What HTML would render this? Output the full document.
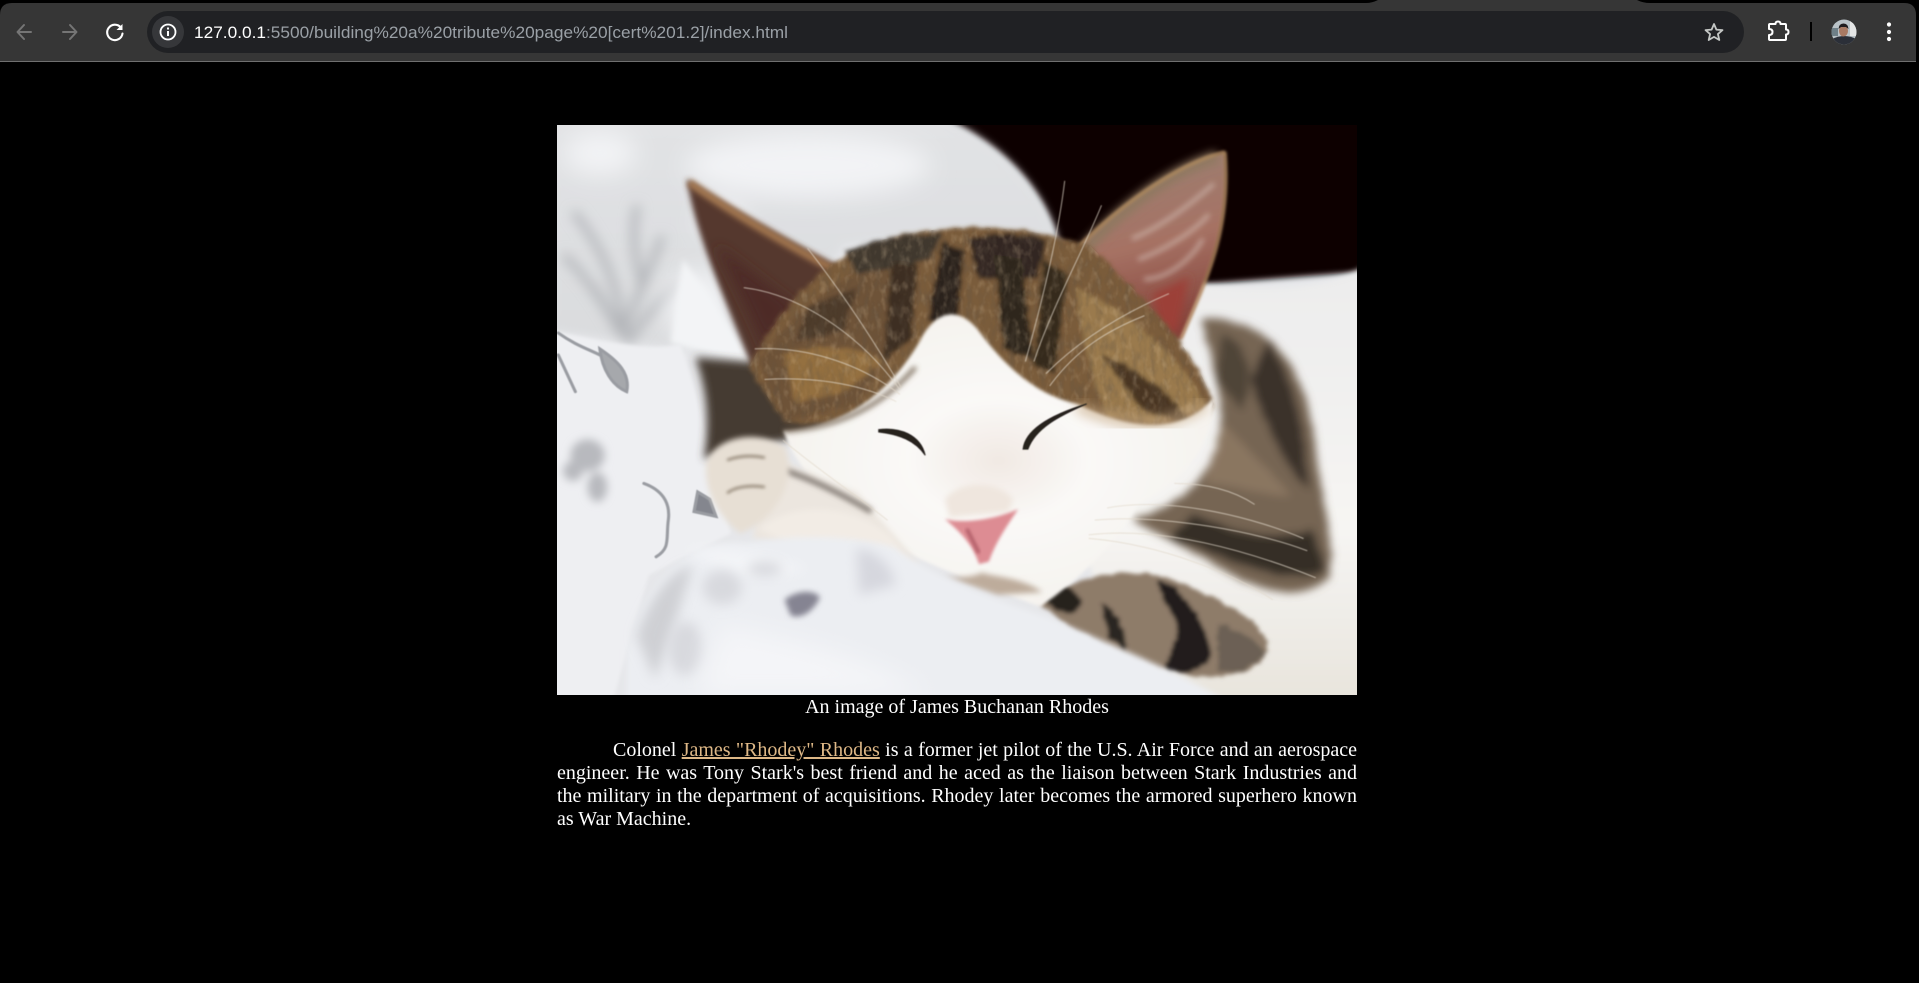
<!DOCTYPE html>
<html lang="en">
<head>
<meta charset="utf-8">
<title>Tribute page</title>
<style>
html,body{margin:0;padding:0;background:#000;width:1919px;height:983px;overflow:hidden}
#chrome{position:absolute;left:0;top:0;display:block}
#main{position:absolute;left:557px;top:125px;width:800px;color:#fff;font:20px/23px "Liberation Serif","Times New Roman",serif}
#cat{display:block;width:800px;height:570px}
#cap{text-align:center;position:relative;top:1px}
#main p{margin:20px 0 0;text-align:justify;text-indent:56px;position:relative;top:1px}
#main a{color:#deb887;text-decoration:underline}
</style>
</head>
<body>
<svg id="chrome" width="1919" height="62" viewBox="0 0 1919 62" xmlns="http://www.w3.org/2000/svg">
  <rect width="1919" height="62" fill="#000"/>
  <path d="M0 62V15Q0 3 12 3H1904Q1916 3 1916 15V62Z" fill="#363636"/>
  <path d="M1366 3Q1372 3 1378 0H1637Q1643 3 1650 3Z" fill="#363636"/>
  <rect y="61" width="1916" height="1" fill="#6f6f6f"/>
  <rect x="147" y="11" width="1597" height="42" rx="21" fill="#202124"/>
  <circle cx="168" cy="32" r="16" fill="#36373a"/>
  <g fill="none" stroke-linecap="round" stroke-linejoin="round">
    <path d="M31 32H18M24 25L17.500 32L24 39" stroke="#757575" stroke-width="2"/>
    <path d="M63 32H76M70 25L76.500 32L70 39" stroke="#757575" stroke-width="2"/>
    <path d="M120.800 27.500A7.700 7.700 0 1 0 122.500 33.500" stroke="#fff" stroke-width="2.100"/>
    <circle cx="168" cy="32" r="7.500" stroke="#fff" stroke-width="1.800"/>
  </g>
  <path d="M122.500 24V30H116.500Z" fill="#fff"/>
  <rect x="167" y="31" width="2" height="5" fill="#fff"/>
  <rect x="167" y="27.500" width="2" height="2" fill="#fff"/>
  <text x="194" y="38" font-family="Liberation Sans, sans-serif" font-size="17" fill="#9aa0a6" textLength="594" lengthAdjust="spacingAndGlyphs"><tspan fill="#fff">127.0.0.1</tspan>:5500/building%20a%20tribute%20page%20[cert%201.2]/index.html</text>
  <path d="M1714 24L1716.400 29.600L1722.500 30.100L1717.900 34.100L1719.300 40L1714 36.900L1708.700 40L1710.100 34.100L1705.500 30.100L1711.600 29.600Z" fill="none" stroke="#c4c7c5" stroke-width="1.800" stroke-linejoin="round"/>
  <path d="M1770 24H1775.500Q1775.500 21.500 1778 21.500Q1780.500 21.500 1780.500 24H1785Q1786 24 1786 25V29.500Q1788.500 29.500 1788.500 32Q1788.500 34.500 1786 34.500V39Q1786 40 1785 40H1770Q1769 40 1769 39V35Q1772.500 35 1772.500 32Q1772.500 29 1769 29V25Q1769 24 1770 24Z" fill="none" stroke="#fff" stroke-width="2" stroke-linejoin="round"/>
  <rect x="1810" y="22" width="2" height="19" fill="#000"/>
  <clipPath id="av"><circle cx="1844" cy="32" r="12.500"/></clipPath>
  <g clip-path="url(#av)">
    <rect x="1830" y="18" width="28" height="28" fill="#b9c2c7"/>
    <rect x="1850" y="20" width="8" height="16" fill="#e4e6e6"/>
    <rect x="1830" y="28" width="8" height="8" fill="#6f8088"/>
    <path d="M1832 46V39Q1838 36 1844 36Q1851 36 1856 39V46Z" fill="#2b2f38"/>
    <ellipse cx="1843.500" cy="31" rx="4.500" ry="5.500" fill="#a87a64"/>
    <path d="M1838.500 29Q1839 23.500 1843.500 23.500Q1848 23.500 1848.500 29L1846 27H1841Z" fill="#1e1b1e"/>
  </g>
  <g fill="#fff"><circle cx="1889" cy="24.500" r="2.100"/><circle cx="1889" cy="32" r="2.100"/><circle cx="1889" cy="39" r="2.100"/></g>
</svg>

<div id="main">
<svg id="cat" viewBox="455 102 654 466" xmlns="http://www.w3.org/2000/svg" preserveAspectRatio="none">
  <defs>
    <filter id="b05" x="-20%" y="-20%" width="140%" height="140%"><feGaussianBlur stdDeviation="0.500"/></filter>
    <filter id="b1" x="-20%" y="-20%" width="140%" height="140%"><feGaussianBlur stdDeviation="1.200"/></filter>
    <filter id="b2" x="-20%" y="-20%" width="140%" height="140%"><feGaussianBlur stdDeviation="2.500"/></filter>
    <filter id="b3" x="-20%" y="-20%" width="140%" height="140%"><feGaussianBlur stdDeviation="3.500"/></filter>
    <filter id="b5" x="-30%" y="-30%" width="160%" height="160%"><feGaussianBlur stdDeviation="5"/></filter>
    <filter id="b10" x="-40%" y="-40%" width="180%" height="180%"><feGaussianBlur stdDeviation="10"/></filter>
    <filter id="fur" x="-10%" y="-10%" width="120%" height="120%">
      <feTurbulence type="fractalNoise" baseFrequency="0.09 0.22" numOctaves="2" seed="4" result="n"/>
      <feDisplacementMap in="SourceGraphic" in2="n" scale="6" xChannelSelector="R" yChannelSelector="G"/>
      <feGaussianBlur stdDeviation="1.800"/>
    </filter>
    <filter id="fur2" x="-10%" y="-10%" width="120%" height="120%">
      <feTurbulence type="fractalNoise" baseFrequency="0.05 0.16" numOctaves="2" seed="9" result="n"/>
      <feDisplacementMap in="SourceGraphic" in2="n" scale="4" xChannelSelector="R" yChannelSelector="G"/>
      <feGaussianBlur stdDeviation="3.500"/>
    </filter>
    <filter id="grain" x="0" y="0" width="100%" height="100%">
      <feTurbulence type="fractalNoise" baseFrequency="0.2 0.08" numOctaves="3" seed="12"/>
      <feColorMatrix type="matrix" values="0 0 0 0 .12  0 0 0 0 .09  0 0 0 0 .06  2.200 0 0 0 -.95"/>
      <feGaussianBlur stdDeviation="0.400"/>
    </filter>
    <filter id="grainL" x="0" y="0" width="100%" height="100%">
      <feTurbulence type="fractalNoise" baseFrequency="0.2 0.1" numOctaves="3" seed="31"/>
      <feColorMatrix type="matrix" values="0 0 0 0 .80  0 0 0 0 .62  0 0 0 0 .40  2.200 0 0 0 -1.100"/>
      <feGaussianBlur stdDeviation="0.400"/>
    </filter>
    <linearGradient id="gTop" x1="0" y1="0" x2="0" y2="1"><stop offset="0" stop-color="#e2e3e5"/><stop offset="1" stop-color="#d9dbdd"/></linearGradient>
    <linearGradient id="gBody" x1="0" y1="0" x2="0" y2="1"><stop offset="0" stop-color="#ececec"/><stop offset=".6" stop-color="#f6f5f3"/><stop offset="1" stop-color="#e8e4dc"/></linearGradient>
    <radialGradient id="gFace" cx="0.5" cy="0.5" r="0.6"><stop offset="0" stop-color="#f1e9e3"/><stop offset=".35" stop-color="#faf9f7"/><stop offset="1" stop-color="#f4f1ec"/></radialGradient>
    <linearGradient id="gEar" x1="0" y1="0" x2="0.2" y2="1"><stop offset="0" stop-color="#9a8275"/><stop offset=".55" stop-color="#a67264"/><stop offset="1" stop-color="#83423a"/></linearGradient>
    <clipPath id="imgclip"><rect x="455" y="102" width="654" height="466"/></clipPath>
    <clipPath id="headclip"><path d="M612 300C640 245 680 205 725 195C780 180 840 185 890 200C930 240 975 280 992 330C985 352 960 362 930 360L700 350L640 345Z"/></clipPath>
  </defs>
  <g clip-path="url(#imgclip)">
    <rect x="455" y="102" width="654" height="466" fill="#e6e7ea"/>
    <!-- dark background -->
    <path d="M765 95L1115 95L1115 222L985 232L880 205L864 195C850 150 815 115 765 95Z" fill="#0a0506" filter="url(#b2)"/>
    <!-- top blanket -->
    <path d="M450 95L768 95C815 115 850 150 864 195L800 190L690 200L620 300L560 285L450 270Z" fill="url(#gTop)" filter="url(#b3)"/>
    <g filter="url(#b5)" fill="none" stroke="#b4b6ba" stroke-width="6" stroke-linecap="round">
      <path d="M470 175C490 200 505 230 510 275"/>
      <path d="M540 195C530 225 515 250 510 275"/>
      <path d="M485 235C495 250 505 265 510 275"/>
      <path d="M555 235C540 245 525 260 515 278"/>
      <path d="M462 210C478 225 495 250 505 270"/>
      <path d="M520 170C515 195 520 215 525 235"/>
    </g>
    <g filter="url(#b10)" fill="#f2f3f5">
      <ellipse cx="660" cy="135" rx="100" ry="26"/>
      <ellipse cx="570" cy="250" rx="26" ry="30"/>
      <ellipse cx="490" cy="125" rx="30" ry="18"/>
      <ellipse cx="590" cy="180" rx="20" ry="14"/>
    </g>
    <path d="M558 212C585 250 605 275 613 298L585 290L548 280Z" fill="#f3f4f6" filter="url(#b2)"/>

    <!-- white body -->
    <path d="M975 232C1030 238 1080 238 1115 218L1115 575L940 575L880 440Z" fill="url(#gBody)" filter="url(#b2)"/>

    <!-- back tabby patch -->
    <g filter="url(#fur2)">
      <path d="M982 260C1035 258 1068 295 1076 370C1080 410 1092 445 1086 472C1062 496 1020 482 985 456L925 425C985 405 1003 370 996 320Z" fill="#766552"/>
      <path d="M1036 278C1058 310 1066 350 1070 400C1050 385 1034 345 1022 310Z" fill="#3a322b"/>
      <path d="M998 272C1020 280 1028 310 1014 335L994 310Z" fill="#4f4439"/>
      <path d="M1000 345C1015 365 1040 385 1055 405C1030 405 1005 395 985 395Z" fill="#8a7660"/>
      <path d="M955 440C1000 452 1050 484 1084 466L1072 432C1040 445 1000 432 975 420Z" fill="#352e28"/>
    </g>

    <!-- forearm tabby -->
    <g filter="url(#fur)">
      <path d="M848 492C880 470 925 462 960 474C1000 492 1035 508 1036 530C1030 556 985 556 950 548C910 536 870 512 848 492Z" fill="#8e7c69"/>
      <path d="M945 472C965 480 985 505 990 535C985 550 965 553 950 548C960 530 968 510 950 490Z" fill="#231e1b"/>
      <path d="M900 493C910 497 922 510 920 532L905 522Z" fill="#2a2521"/>
      <path d="M852 488C865 475 878 478 884 490C882 505 870 505 852 490Z" fill="#25201d"/>
      <path d="M995 510C1015 515 1032 525 1034 535C1020 550 1005 550 995 548Z" fill="#6c6054"/>
    </g>

    <!-- pillow -->
    <path d="M450 270C490 278 530 288 556 281C575 340 590 400 597 436L530 470L500 575L450 575Z" fill="#eeeff2" filter="url(#b1)"/>
    <g filter="url(#b05)" fill="none" stroke="#9a9ca2" stroke-width="2.500" stroke-linecap="round">
      <path d="M456 272C470 282 480 285 490 290"/>
      <path d="M490 285C505 295 515 305 512 320C500 315 492 302 490 285Z" fill="#a6a8ac"/>
      <path d="M456 290L470 320"/>
      <path d="M526 395C540 400 548 410 546 425C544 440 548 448 536 455"/>
      <path d="M570 402L567 418L585 422L580 408Z" fill="#84868e"/>
    </g>
    <g filter="url(#b3)" fill="#b8b9be">
      <ellipse cx="480" cy="372" rx="14" ry="13"/><ellipse cx="488" cy="398" rx="8" ry="12"/><ellipse cx="468" cy="385" rx="8" ry="8"/>
    </g>

    <!-- dark fur behind -->
    <path d="M568 292L660 300L700 345L640 360L575 375C580 345 578 320 568 292Z" fill="#443a33" filter="url(#b3)"/>

    <!-- left ear -->
    <path d="M561 146C600 172 660 205 700 225L655 305L614 298C590 240 568 190 561 146Z" fill="#54382f" filter="url(#b2)"/>
    <path d="M563 149C600 175 640 198 690 225" fill="none" stroke="#a5784f" stroke-width="6" filter="url(#b2)"/>
    <path d="M585 200C600 230 615 260 625 285L650 250Z" fill="#4d2a28" filter="url(#b5)"/>

    <!-- right ear -->
    <path d="M1001 124C960 134 910 172 878 205L945 282L965 277C985 230 1006 190 1001 124Z" fill="url(#gEar)" filter="url(#b1)"/>
    <path d="M995 128C955 140 915 172 885 205" fill="none" stroke="#8f7860" stroke-width="10" filter="url(#b3)"/>
    <path d="M1001 124C960 134 910 172 878 205M1001 124C1006 190 985 230 965 277" fill="none" stroke="#b8905f" stroke-width="2" filter="url(#b1)"/>
    <g filter="url(#b2)" fill="none" stroke="#d7c3ba" stroke-width="3" opacity=".7">
      <path d="M925 195C950 185 975 165 992 150"/><path d="M930 212C950 205 975 190 988 175"/><path d="M935 228C955 228 975 210 983 195"/>
    </g>
    <path d="M942 240C955 235 965 230 972 225L962 272L948 268Z" fill="#9c4138" filter="url(#b3)"/>

    <!-- head tabby -->
    <g filter="url(#fur)">
      <path d="M612 300C640 245 680 205 725 195C780 180 840 185 890 200C930 240 975 280 992 330C985 352 960 362 930 360L700 350L640 345Z" fill="#7a5c3a"/>
      <path d="M620 295C650 250 690 225 720 215C740 240 730 290 700 330L640 345Z" fill="#6e5238"/>
      <path d="M880 235C920 255 965 290 985 330C960 350 930 345 905 340C890 300 880 265 880 235Z" fill="#9a7a4e"/>
      <path d="M690 205C720 195 745 190 770 190L760 212L700 224Z" fill="#3f382f"/>
      <path d="M790 195C810 188 830 190 855 195L848 228L800 228Z" fill="#322821"/>
      <path d="M770 198L788 204L782 268L758 262Z" fill="#2a231d"/>
      <path d="M812 208L835 212L845 295L820 285Z" fill="#2f261f"/>
      <path d="M728 215L750 215L745 278L722 295Z" fill="#3d2e22"/>
      <path d="M853 212L872 224L862 305L845 298Z" fill="#352a1f"/>
      <path d="M900 290C930 300 960 325 975 347L935 337Z" fill="#4a3522"/>
      <path d="M640 290C670 280 700 282 722 295L690 320L650 330Z" fill="#94703f"/>
      <path d="M660 250L700 235L690 270L650 280Z" fill="#4e3b2b"/>
    </g>
    <g clip-path="url(#headclip)">
      <rect x="600" y="180" width="400" height="190" filter="url(#grain)" opacity=".38"/>
      <rect x="600" y="180" width="400" height="190" filter="url(#grainL)" opacity=".3"/>
    </g>

    <!-- white face -->
    <path d="M752 278C764 254 782 250 798 268C820 298 845 322 880 330C925 352 965 355 992 325C992 365 965 395 930 412C912 445 880 475 850 496C815 482 785 472 750 456C700 432 655 395 640 352C680 350 722 330 752 278Z" fill="url(#gFace)" filter="url(#b1)"/>
    <path d="M640 352C680 350 718 335 748 300" fill="none" stroke="#6d5b48" stroke-width="3" filter="url(#b2)"/>
    <path d="M880 332C910 345 950 355 985 330" fill="none" stroke="#c9ab85" stroke-width="6" filter="url(#b5)"/>

    <!-- nose and mouth -->
    <path d="M772 408C785 392 815 392 828 408L824 418L776 423Z" fill="#efe6de" filter="url(#b2)"/>
    <path d="M772 424C785 428 812 425 832 416C824 428 814 442 808 459L800 461C795 445 785 435 772 424Z" fill="#dd8c93" filter="url(#b1)"/>
    <path d="M790 432L800 452" stroke="#b25f69" stroke-width="3" fill="none" filter="url(#b1)"/>
    <path d="M802 460V468" fill="none" stroke="#8d7b6a" stroke-width="2" filter="url(#b05)"/>
    <path d="M770 470C785 474 800 470 802 468C815 472 835 472 852 484L815 486Z" fill="#bdac9b" filter="url(#b2)"/>

    <!-- eyes -->
    <path d="M718 351C735 349 752 355 756 372C748 360 735 355 718 353Z" fill="#25201d" stroke="#25201d" stroke-width=".8" filter="url(#b05)"/>
    <path d="M836 367C838 350 862 338 888 330C865 340 846 350 840 367Z" fill="#25201d" stroke="#25201d" stroke-width=".8" filter="url(#b05)"/>

    <!-- under-cheek arm -->
    <path d="M628 372L700 402L752 462L615 440Z" fill="#ece6df" filter="url(#b2)"/>
    <path d="M640 384C665 392 690 405 712 418" fill="none" stroke="#787069" stroke-width="4" filter="url(#b2)"/>
    <!-- paw -->
    <path d="M577 378C585 356 620 350 642 366C652 395 632 425 605 436C590 425 574 402 577 378Z" fill="#e7dfd4" filter="url(#b2)"/>
    <path d="M594 376C605 372 615 372 625 374M594 403C600 398 612 396 625 398" fill="none" stroke="#8f8272" stroke-width="2" filter="url(#b1)"/>
    <path d="M620 432C650 408 700 412 730 440L748 468L660 452Z" fill="#f2ece5" filter="url(#b2)"/>

    <!-- foreground blanket -->
    <path d="M512 530C525 475 560 440 610 444C650 436 700 438 730 447C770 476 820 492 860 506C920 532 970 552 1005 575L512 575Z" fill="#eceef2" filter="url(#b2)"/>
    <path d="M520 520C532 485 550 465 566 462L548 520L535 555Z" fill="#cfd0d4" filter="url(#b5)"/>
    <path d="M560 450C590 445 620 450 660 465L640 470L600 470Z" fill="#f3f4f7" filter="url(#b5)"/>
    <path d="M641 490C650 483 664 481 670 488C666 498 655 507 646 503Z" fill="#858492" filter="url(#b2)"/>
    <path d="M700 448C715 450 728 460 732 478L702 486Z" fill="#d6d7de" filter="url(#b5)"/>
    <g filter="url(#b5)" fill="#d8d9de"><ellipse cx="590" cy="480" rx="16" ry="14"/><ellipse cx="625" cy="465" rx="14" ry="6"/><ellipse cx="560" cy="530" rx="14" ry="22"/></g>
    <path d="M590 510C630 520 700 530 760 568L570 568Z" fill="#f4f5f8" filter="url(#b10)"/>

    <!-- whiskers -->
    <g fill="none" stroke="#e2d9cb" stroke-width="0.900" stroke-linecap="round" opacity=".65" filter="url(#b05)">
      <path d="M608 235C650 240 700 270 735 318"/>
      <path d="M617 285C655 283 700 295 735 322"/>
      <path d="M625 310C660 308 700 312 732 328"/>
      <path d="M660 203C685 235 712 275 736 316"/>
      <path d="M640 360C670 385 700 405 725 425"/>
      <path d="M870 148C865 190 852 245 838 295"/>
      <path d="M900 168C885 205 860 250 845 295"/>
      <path d="M955 240C920 255 885 275 855 305"/>
      <path d="M935 258C905 270 880 285 858 315"/>
      <path d="M890 437C950 430 1020 450 1075 472"/>
      <path d="M895 425C950 420 1030 435 1068 450"/>
      <path d="M905 415C960 405 1030 425 1065 440"/>
      <path d="M890 440C950 445 1010 470 1040 490"/>
      <path d="M960 395C990 395 1010 402 1025 412"/>
    </g>
  </g>
</svg>
<div id="cap">An image of James Buchanan Rhodes</div>
<p>Colonel <a href="#">James "Rhodey" Rhodes</a> is a former jet pilot of the U.S. Air Force and an aerospace engineer. He was Tony Stark's best friend and he aced as the liaison between Stark Industries and the military in the department of acquisitions. Rhodey later becomes the armored superhero known as War Machine.</p>
</div>
</body>
</html>
